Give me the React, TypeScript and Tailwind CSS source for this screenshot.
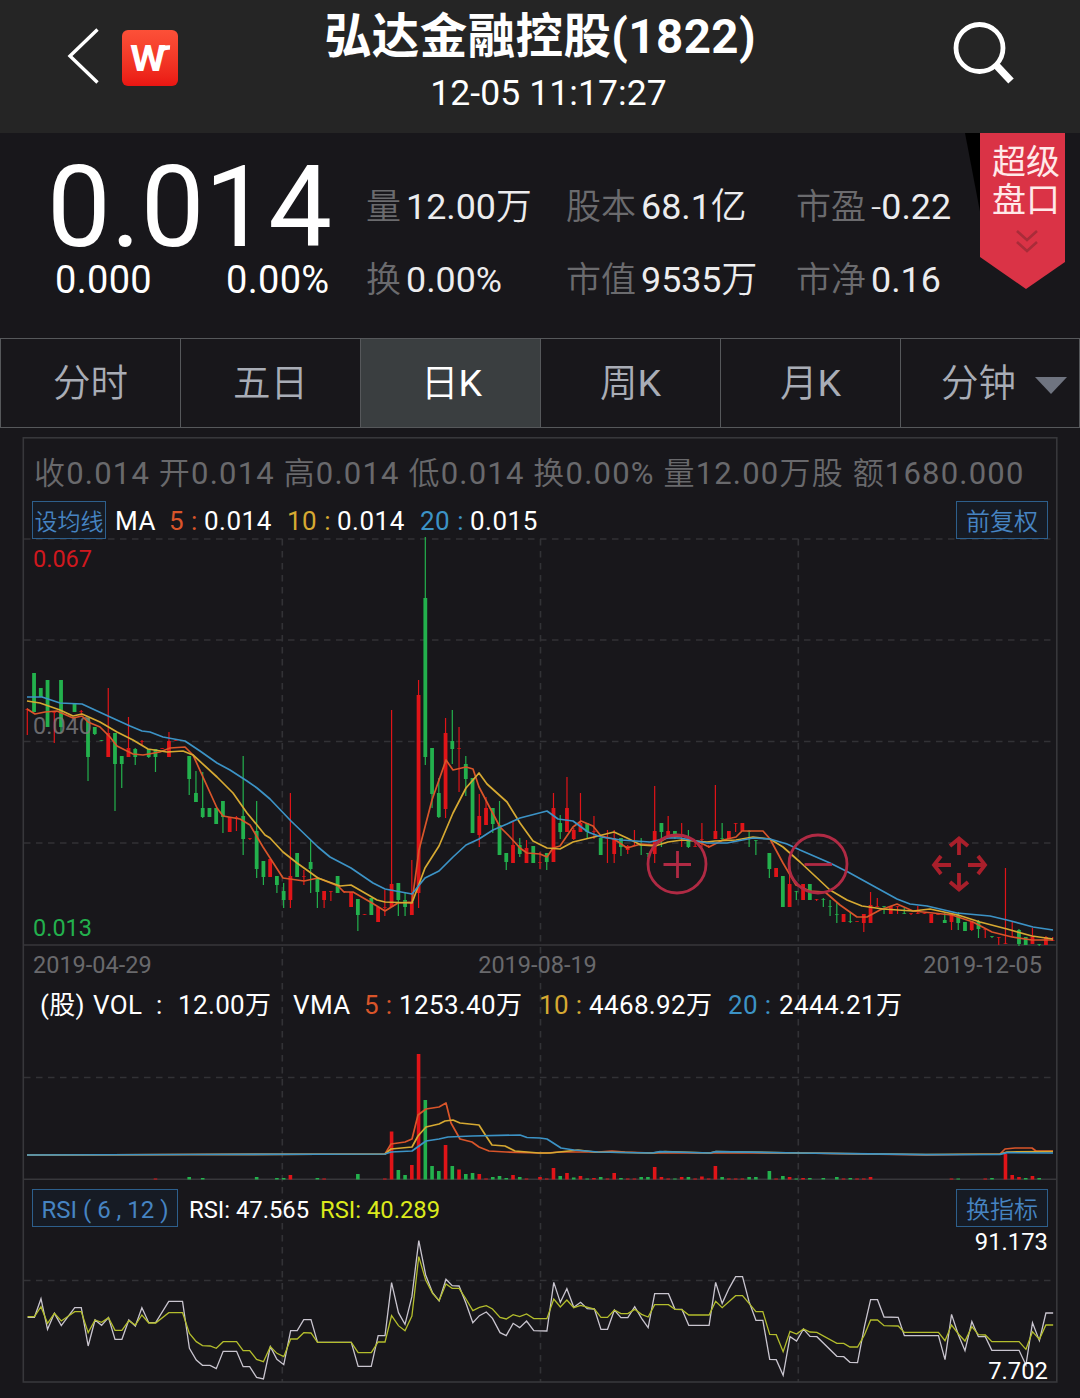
const STEP = 6.746
const FIRST_X = 27.3

const xAt = (i: number) => FIRST_X + i * STEP

// one entry per trading day: index, direction, high, body top, body bottom, low
type Candle = [number, 'r' | 'g', number, number, number, number]

const candles: Candle[] = [
  [0, 'r', 708, 709, 710, 735],
  [1, 'g', 673, 673, 712, 712],
  [2, 'g', 688, 688, 697, 697],
  [3, 'g', 680, 680, 727, 727],
  [4, 'r', 712, 712, 713, 743],
  [5, 'g', 680, 680, 727, 733],
  [7, 'g', 704, 704, 712, 712],
  [8, 'r', 710, 711, 712, 714],
  [9, 'g', 718, 718, 757, 781],
  [10, 'g', 727, 727, 734, 735],
  [11, 'g', 740, 740, 741, 741],
  [12, 'r', 688, 733, 757, 757],
  [13, 'g', 733, 733, 764, 811],
  [14, 'g', 756, 756, 764, 788],
  [15, 'r', 717, 748, 757, 757],
  [16, 'g', 748, 749, 757, 765],
  [17, 'r', 740, 741, 742, 746],
  [18, 'g', 749, 749, 757, 758],
  [19, 'g', 749, 749, 757, 772],
  [20, 'r', 748, 748, 749, 749],
  [21, 'r', 732, 741, 757, 757],
  [22, 'r', 740, 740, 741, 741],
  [24, 'g', 756, 756, 779, 795],
  [25, 'g', 771, 793, 802, 802],
  [26, 'g', 772, 808, 817, 818],
  [27, 'g', 808, 808, 817, 817],
  [28, 'g', 808, 808, 824, 824],
  [29, 'g', 801, 801, 817, 833],
  [30, 'r', 817, 817, 832, 832],
  [31, 'r', 816, 817, 818, 831],
  [32, 'g', 756, 816, 839, 855],
  [33, 'r', 838, 838, 839, 840],
  [34, 'g', 801, 831, 869, 878],
  [35, 'g', 861, 861, 877, 885],
  [36, 'r', 859, 859, 877, 877],
  [37, 'g', 876, 876, 885, 893],
  [38, 'g', 883, 891, 900, 908],
  [39, 'r', 793, 876, 900, 908],
  [40, 'g', 853, 853, 877, 877],
  [41, 'r', 870, 876, 877, 885],
  [42, 'g', 840, 862, 869, 893],
  [43, 'g', 878, 878, 892, 908],
  [44, 'r', 891, 891, 900, 908],
  [45, 'r', 891, 891, 892, 901],
  [46, 'g', 876, 876, 893, 893],
  [47, 'r', 891, 891, 892, 893],
  [48, 'r', 892, 892, 907, 907],
  [49, 'g', 899, 899, 915, 931],
  [50, 'r', 914, 914, 915, 915],
  [51, 'g', 898, 898, 915, 915],
  [52, 'r', 907, 907, 922, 922],
  [53, 'r', 890, 907, 908, 916],
  [54, 'r', 710, 884, 907, 907],
  [55, 'g', 883, 883, 900, 916],
  [56, 'g', 892, 900, 907, 916],
  [57, 'r', 860, 902, 915, 915],
  [58, 'r', 680, 695, 893, 908],
  [59, 'g', 537, 598, 757, 765],
  [60, 'g', 748, 748, 794, 808],
  [61, 'g', 778, 793, 817, 818],
  [62, 'r', 718, 733, 809, 818],
  [63, 'g', 710, 741, 749, 764],
  [64, 'r', 727, 748, 749, 792],
  [65, 'g', 756, 764, 779, 796],
  [66, 'g', 778, 778, 833, 833],
  [67, 'r', 794, 816, 835, 847],
  [68, 'r', 797, 808, 825, 825],
  [69, 'g', 808, 808, 824, 833],
  [70, 'g', 801, 825, 855, 855],
  [71, 'g', 853, 853, 862, 870],
  [72, 'r', 822, 845, 863, 863],
  [73, 'g', 838, 845, 854, 857],
  [74, 'r', 840, 848, 863, 863],
  [75, 'g', 846, 846, 863, 863],
  [76, 'r', 852, 862, 863, 869],
  [77, 'g', 853, 853, 862, 870],
  [78, 'r', 793, 808, 862, 862],
  [79, 'g', 815, 823, 832, 839],
  [80, 'r', 777, 808, 832, 832],
  [81, 'r', 828, 830, 839, 840],
  [82, 'r', 793, 823, 832, 832],
  [83, 'g', 823, 823, 832, 839],
  [84, 'r', 816, 831, 832, 839],
  [85, 'g', 838, 838, 855, 855],
  [86, 'r', 830, 838, 839, 863],
  [87, 'r', 830, 838, 854, 863],
  [88, 'g', 838, 838, 847, 856],
  [89, 'r', 845, 846, 850, 854],
  [90, 'r', 830, 845, 846, 846],
  [91, 'g', 838, 845, 846, 855],
  [92, 'g', 853, 853, 854, 857],
  [93, 'r', 786, 831, 854, 863],
  [94, 'g', 823, 823, 832, 847],
  [95, 'r', 816, 831, 838, 838],
  [96, 'g', 831, 831, 835, 839],
  [97, 'r', 823, 840, 841, 847],
  [98, 'g', 830, 840, 847, 848],
  [99, 'r', 840, 846, 847, 847],
  [100, 'r', 823, 839, 840, 847],
  [101, 'r', 845, 846, 847, 848],
  [102, 'r', 785, 831, 839, 839],
  [103, 'g', 823, 838, 839, 840],
  [104, 'r', 831, 831, 839, 839],
  [105, 'r', 823, 823, 824, 832],
  [106, 'r', 823, 823, 831, 831],
  [107, 'g', 830, 831, 832, 847],
  [108, 'g', 840, 840, 841, 855],
  [110, 'g', 853, 853, 869, 878],
  [111, 'r', 868, 868, 877, 877],
  [112, 'g', 876, 876, 907, 907],
  [113, 'r', 862, 884, 907, 907],
  [114, 'g', 891, 891, 892, 900],
  [115, 'r', 884, 884, 900, 900],
  [116, 'g', 884, 884, 900, 900],
  [117, 'r', 899, 899, 900, 901],
  [118, 'g', 898, 899, 900, 907],
  [119, 'g', 900, 906, 907, 916],
  [120, 'g', 902, 914, 915, 923],
  [121, 'r', 914, 914, 922, 922],
  [122, 'g', 912, 921, 922, 923],
  [123, 'r', 921, 921, 922, 922],
  [124, 'r', 914, 914, 923, 932],
  [125, 'r', 892, 905, 923, 923],
  [126, 'r', 898, 906, 907, 907],
  [127, 'g', 906, 906, 907, 914],
  [128, 'r', 906, 906, 914, 914],
  [129, 'r', 906, 906, 907, 914],
  [130, 'g', 908, 913, 914, 914],
  [131, 'r', 913, 913, 914, 915],
  [132, 'r', 906, 913, 914, 914],
  [133, 'r', 913, 913, 914, 914],
  [134, 'r', 914, 914, 923, 923],
  [135, 'r', 914, 914, 915, 915],
  [136, 'g', 913, 920, 923, 923],
  [137, 'r', 914, 914, 922, 930],
  [138, 'g', 912, 915, 923, 930],
  [139, 'g', 922, 922, 931, 931],
  [140, 'r', 922, 922, 930, 931],
  [141, 'g', 920, 922, 929, 938],
  [142, 'r', 928, 929, 930, 938],
  [143, 'g', 936, 936, 937, 938],
  [144, 'r', 937, 937, 938, 945],
  [145, 'r', 868, 943, 944, 944],
  [146, 'r', 922, 936, 937, 937],
  [147, 'g', 929, 930, 944, 946],
  [148, 'g', 937, 937, 945, 945],
  [149, 'r', 928, 937, 944, 944],
  [150, 'g', 944, 944, 945, 946],
  [151, 'r', 936, 937, 945, 945],
  [152, 'r', 937, 940, 941, 941],
]

const volumes: [number, 'r' | 'g', number][] = [
  [19, 'r', 1], [24, 'g', 2.5], [26, 'g', 1.5], [34, 'g', 2.5], [37, 'g', 1.5], [38, 'g', 1.5],
  [39, 'r', 4.5], [43, 'g', 1.5], [44, 'r', 1], [49, 'g', 5.5], [53, 'r', 1], [54, 'r', 48],
  [55, 'g', 9.5], [56, 'g', 4.5], [57, 'r', 14.5], [58, 'r', 125.5], [59, 'g', 79.5], [60, 'g', 13.5],
  [61, 'g', 8.5], [62, 'r', 34.5], [63, 'g', 13.5], [64, 'r', 10], [65, 'g', 5.5], [66, 'g', 6.5],
  [67, 'r', 5.5], [68, 'r', 1], [69, 'g', 2.5], [70, 'g', 3.5], [71, 'g', 1.5], [72, 'r', 4.5],
  [73, 'g', 2.5], [74, 'r', 1], [76, 'r', 2.5], [77, 'r', 1], [78, 'r', 11.5], [79, 'g', 3.5],
  [80, 'r', 6.5], [81, 'g', 2], [82, 'r', 3.5], [83, 'g', 1], [84, 'r', 1.5], [85, 'g', 2.5],
  [86, 'r', 1], [87, 'r', 6.5], [88, 'g', 1.5], [89, 'r', 1], [90, 'r', 1], [91, 'g', 2.5],
  [92, 'g', 2.5], [93, 'r', 12.5], [94, 'r', 2.5], [95, 'r', 1], [96, 'g', 1], [97, 'r', 2.5],
  [98, 'g', 2.5], [99, 'r', 1], [100, 'r', 3], [101, 'r', 1], [102, 'r', 13.5], [103, 'g', 2.5],
  [104, 'r', 1], [105, 'r', 1], [106, 'r', 1], [107, 'g', 2.5], [108, 'g', 2.5], [110, 'g', 8.5],
  [111, 'r', 1], [112, 'g', 3.5], [113, 'r', 2.5], [114, 'g', 1], [115, 'r', 1.5], [116, 'g', 1.5],
  [118, 'g', 1.5], [120, 'g', 2.5], [121, 'r', 1], [122, 'g', 1.5], [123, 'r', 1], [124, 'r', 1],
  [125, 'r', 2.5], [137, 'r', 1], [138, 'g', 1], [142, 'r', 1], [143, 'g', 1.5], [145, 'r', 25.5],
  [146, 'r', 4.5], [147, 'r', 2.5], [148, 'g', 1.5], [149, 'r', 3.5], [150, 'g', 1.5],
]

const MA5 =
  '27,709 35,714 45,712 57,711 73,718 82,716 88,722 100,727 110,737 117,746 133,754 143,755 160,752 170,748 185,747 193,755 217,808 223,816 240,819 250,825 263,847 283,878 304,881 318,878 338,886 344,892 353,892 372,903 385,911 398,903 412,902 419,850 432,800 446,760 453,770 466,767 473,769 479,787 490,808 500,827 510,837 520,848 527,853 540,854 547,857 553,848 560,846 573,827 581,821 593,826 601,836 614,839 627,848 641,844 655,845 668,837 683,836 703,844 709,847 723,840 736,837 742,831 763,831 770,839 783,863 796,885 810,891 825,892 840,905 857,917 867,917 880,910 897,904 913,911 933,913 952,915 973,922 992,932 1012,937 1032,940 1053,940'
const MA10 =
  '27,701 40,703 60,710 73,716 82,714 100,722 117,732 133,740 148,749 167,752 183,751 193,755 217,777 233,793 247,813 257,825 265,835 270,838 283,852 297,863 318,878 340,886 351,885 377,900 385,902 412,903 425,868 439,846 453,813 466,788 479,773 487,784 507,802 520,823 533,841 547,848 560,849 573,842 594,837 614,832 627,838 641,845 655,846 668,842 682,840 707,842 715,841 736,840 753,837 770,839 783,847 800,862 830,890 847,900 862,906 883,909 913,911 930,909 958,915 980,922 1007,929 1032,936 1053,939'
const MA20 =
  '27,697 42,697 60,703 82,704 108,716 130,726 142,731 150,732 163,737 185,741 200,751 217,763 230,770 247,781 257,788 270,799 291,821 318,847 330,857 351,868 373,883 385,889 412,894 425,878 439,871 453,857 466,845 479,839 493,830 507,824 520,818 547,811 558,819 573,821 588,832 601,837 621,840 650,842 668,838 680,838 707,843 727,843 753,838 770,839 787,844 800,850 830,863 848,872 877,888 897,899 910,904 927,906 957,913 990,916 1007,920 1033,927 1053,930'

const VMA5 =
  '27,1155 190,1154.5 385,1154 391,1144 405,1142 412,1139 418,1115 426,1109 439,1107 446,1103 451,1123 460,1139 472,1142 479,1147 489,1151 506,1152 539,1153 547,1153 560,1152 598,1152 612,1151 625,1152 652,1153 798,1153 926,1155 1000,1154 1005,1149 1015,1148 1032,1148 1036,1151 1053,1151'
const VMA10 =
  '27,1155 190,1154.5 385,1154 391,1149 412,1147 418,1136 426,1127 439,1124 445,1121 453,1120 460,1123 479,1125 486,1136 492,1145 505,1146 515,1151 539,1153 550,1153 578,1150 595,1152 652,1153 665,1151.5 710,1153 716,1151.5 798,1153 926,1154.5 1000,1154 1007,1152 1053,1151.5'
const VMA20 =
  '27,1155 190,1154.5 385,1154 391,1152 412,1151 426,1141 439,1139 448,1137 472,1136 520,1135 527,1137.5 540,1138 547,1139 561,1148 574,1150 598,1152 652,1153 660,1151.7 710,1153 716,1151.7 798,1153 850,1153.7 926,1154.7 1000,1154.3 1007,1152.7 1053,1153'

const RSI6 =
  '80,412 100,412 119,356 138,448 158,400 178,437 217,383 236,383 256,498 276,420 295,436 315,413 334,478 354,478 374,420 393,438 412,383 432,428 452,428 490,364 530,364 550,505 570,540 588,556 610,556 628,566 648,514 687,514 706,560 725,560 745,592 765,597 785,500 804,538 824,554 844,452 863,452 882,419 903,419 922,487 1020,487 1040,559 1078,559 1098,467 1118,467 1137,308 1157,398 1176,433 1196,350 1216,182 1236,285 1256,338 1275,363 1295,298 1313,317 1333,318 1353,370 1373,428 1392,407 1412,396 1430,415 1452,458 1470,467 1490,430 1509,443 1529,423 1550,452 1588,453 1608,307 1627,367 1646,326 1666,382 1686,367 1705,386 1726,387 1745,448 1764,448 1784,390 1803,413 1823,413 1843,380 1863,415 1882,443 1901,341 1941,341 1960,388 1980,388 2000,436 2059,436 2078,307 2097,370 2117,325 2136,290 2156,290 2175,365 2195,421 2215,421 2235,538 2254,539 2274,586 2294,470 2313,483 2333,447 2352,469 2372,470 2430,529 2450,530 2468,547 2490,548 2510,440 2528,359 2548,359 2567,411 2608,412 2626,467 2725,467 2744,539 2763,403 2783,465 2802,512 2822,425 2841,470 2861,470 2880,511 2959,511 2979,555 2998,428 3018,482 3037,399 3058,399'
const RSI12 =
  '80,410 100,410 119,380 138,430 158,400 178,423 217,395 236,395 256,458 276,420 295,427 315,413 334,451 354,451 374,422 393,435 412,405 432,429 452,429 490,398 530,398 550,460 570,485 588,497 610,498 628,505 648,485 687,485 706,512 725,512 745,538 765,545 785,500 804,520 824,530 844,477 863,477 882,458 903,459 922,487 1020,487 1040,518 1078,518 1098,486 1118,486 1137,407 1157,437 1176,452 1196,408 1216,230 1236,300 1256,340 1275,362 1295,312 1313,325 1333,325 1353,357 1373,392 1392,382 1412,377 1430,387 1452,412 1470,417 1490,404 1509,410 1529,402 1550,416 1588,416 1608,357 1627,381 1646,360 1666,383 1686,376 1726,387 1745,412 1764,412 1784,390 1803,401 1823,401 1843,388 1863,403 1882,411 1901,374 1941,374 1960,388 1980,389 2000,405 2059,405 2078,364 2097,383 2136,347 2156,347 2175,370 2195,395 2215,395 2235,463 2254,464 2274,515 2294,454 2313,462 2333,447 2352,456 2372,457 2430,490 2450,490 2468,501 2490,501 2510,465 2528,420 2548,420 2567,437 2608,438 2626,457 2725,457 2744,482 2763,435 2783,462 2802,483 2822,440 2841,464 2861,465 2880,485 2959,485 2979,508 2998,455 3018,478 3037,435 3058,435'

const COLORS = { r: '#e01418', g: '#23b14d' }
const ORANGE = '#d9552a'
const YELLOW = '#d6a932'
const BLUE = '#3c93c6'

const tabs = ['分时', '五日', '日K', '周K', '月K']

// Chinese runs are set a little lighter than the latin letters and digits
function Mixed({ children }: { children: string }) {
  return (
    <span className="whitespace-pre">
      {children.split(/([0-9A-Za-z.%]+)/).map((part, i) => (
        <span key={i} className={i % 2 ? 'font-normal' : 'font-[350]'}>
          {part}
        </span>
      ))}
    </span>
  )
}

function Header() {
  return (
    <header className="flex h-[133px] bg-[#252525]">
      <div className="flex w-[250px] pl-[66px] pt-[26px]">
        <svg width="34" height="60" viewBox="0 0 34 60" fill="none" stroke="#fff" strokeWidth="3.4">
          <path d="M31.5 3.5 4 30 31.5 56.5" />
        </svg>
        <div className="ml-[22px] mt-1 flex size-14 items-center justify-center rounded-md bg-linear-to-b from-[#fc5038] to-[#ea1512]">
          <svg width="56" height="56" viewBox="0 0 56 56">
            <text x="8" y="41" fill="#fff" fontSize="36" fontWeight="700" fontFamily="Roboto" textLength="36" lengthAdjust="spacingAndGlyphs">
              W
            </text>
            <path d="M39.500 21q1-4 8.500-3.500" fill="none" stroke="#fff" strokeWidth="4.5" />
          </svg>
        </div>
      </div>
      <div className="flex w-[580px] flex-col items-center pt-[9px] text-white">
        <h1 className="whitespace-nowrap text-[47.5px] font-bold leading-[56px] tracking-[0.400px]">弘达金融控股(1822)</h1>
        <div className="mt-[7px] pl-[17px] text-[35.5px] leading-[42px] tracking-[0.100px]">12-05 11:17:27</div>
      </div>
      <svg className="ml-[120px] mt-[20px]" width="68" height="68" viewBox="950 20 68 68" fill="none" stroke="#fff">
        <circle cx="979.5" cy="48" r="23.5" strokeWidth="4.8" />
        <path d="m996 65 15 16" strokeWidth="7.5" />
      </svg>
    </header>
  )
}

function Stat({ label, value }: { label: string; value: string }) {
  return (
    <div className="flex h-[73px] items-baseline whitespace-nowrap leading-[73px]">
      <span className="text-[35px] font-[350] text-[#6b6b6e]">{label}</span>
      <span className="ml-[5px] text-[35.800px] text-[#ececee]">
        <Mixed>{value}</Mixed>
      </span>
    </div>
  )
}

function Quote() {
  return (
    <section className="flex h-[205px]">
      <div className="w-[366px] pl-[47px] pt-[19px] text-white">
        <div className="text-[113.500px] leading-[111px]">0.014</div>
        <div className="flex pl-[8px] text-[38px] leading-[34px] tracking-[0.300px]">
          <span className="w-[171px]">0.000</span>
          <span>0.00%</span>
        </div>
      </div>
      <div className="w-[200px] pt-[38px]">
        <Stat label="量" value="12.00万" />
        <Stat label="换" value="0.00%" />
      </div>
      <div className="w-[230px] pt-[38px]">
        <Stat label="股本" value="68.1亿" />
        <Stat label="市值" value="9535万" />
      </div>
      <div className="w-[169px] pt-[38px]">
        <Stat label="市盈" value="-0.22" />
        <Stat label="市净" value="0.16" />
      </div>
      <div className="grid h-[158px] w-[102px]">
        <svg className="[grid-area:1/1]" width="102" height="158" viewBox="965 133 102 158">
          <path d="M965 133h16v84z" fill="#000" />
          <path d="M980 133h85v129l-39 27-46-32z" fill="#da3346" />
          <path d="m1017 231 10 9 10-9M1017 242l10 9 10-9" fill="none" stroke="#a92c39" strokeWidth="2.6" />
        </svg>
        <div className="pl-[27px] pt-[10px] text-[34px] leading-[38px] text-[#ffe9e9] [grid-area:1/1]">
          超级
          <br />
          盘口
        </div>
      </div>
    </section>
  )
}

function Tabs() {
  return (
    <nav className="flex h-[90px] border border-[#56585b] text-[37.5px] text-[#a9adb6]">
      {tabs.map((t) => (
        <div
          key={t}
          className={
            t === '日K'
              ? 'flex w-[180px] items-center justify-center border-r border-[#56585b] bg-[#3a3e40] pl-[2px] text-white'
              : 'flex w-[180px] items-center justify-center border-r border-[#56585b]'
          }
        >
          <Mixed>{t}</Mixed>
        </div>
      ))}
      <div className="flex flex-1 items-center pl-[40px]">
        <Mixed>分钟</Mixed>
        <svg className="ml-[19px] mt-1" width="32" height="17" viewBox="0 0 32 17">
          <path d="M0 0h32L16 17z" fill="#6f7480" />
        </svg>
      </div>
    </nav>
  )
}

function Plot() {
  return (
    <svg className="[grid-area:1/1]" width="1036" height="946" viewBox="22 437 1036 946" fill="none">
      <g stroke="#323236" strokeWidth="1.6" strokeDasharray="6.5 5.5">
        {[539, 640, 741.5, 843, 1077.5, 1280.5].map((y) => (
          <path key={y} d={`M24 ${y}H1057`} />
        ))}
        {[282.3, 540.5, 798.3].map((x) => (
          <path key={x} d={`M${x} 539V1382`} />
        ))}
      </g>
      <g stroke="#37373b" strokeWidth="1.6">
        <path d="M24 945H1057M24 1179.3H1057" />
        <rect x="23.3" y="437.8" width="1033.5" height="944.2" />
      </g>

      {candles.map(([i, c, high, top, bottom, low]) => {
        const x = xAt(i)
        const thin = bottom - top <= 1
        return (
          <g key={i} fill={COLORS[c]}>
            <rect x={x - 0.6} y={high} width="1.2" height={low - high} />
            <rect x={x - 1.9} y={top} width="3.8" height={bottom - top} opacity={thin ? 0.7 : 1} />
          </g>
        )
      })}
      <text x="33" y="734" fill="#7a7a7d" fillOpacity=".85" fontSize="23.5">
        0.040
      </text>
      <g strokeWidth="1.7" strokeLinejoin="round">
        <polyline points={MA5} stroke={ORANGE} />
        <polyline points={MA10} stroke={YELLOW} />
        <polyline points={MA20} stroke={BLUE} />
      </g>

      {volumes.map(([i, c, h]) => (
        <rect key={i} x={xAt(i) - 1.8} y={1179.5 - h} width="3.6" height={h} fill={COLORS[c]} />
      ))}
      <g strokeWidth="1.7" strokeLinejoin="round">
        <polyline points={VMA5} stroke={ORANGE} />
        <polyline points={VMA10} stroke={YELLOW} />
        <polyline points={VMA20} stroke={BLUE} />
      </g>

      <g transform="translate(0 1180) scale(.34439 .33333)" strokeWidth="1.3">
        <polyline points={RSI6} stroke="#c9c5cf" vectorEffect="non-scaling-stroke" />
        <polyline points={RSI12} stroke="#b3bd2c" vectorEffect="non-scaling-stroke" />
      </g>

      {/* zoom and pan controls */}
      <g stroke="#b02a44" strokeWidth="2.8">
        <circle cx="677" cy="864" r="29" />
        <path d="M663.5 864.5h27.5M677.5 851v27" />
        <circle cx="818" cy="864" r="29" />
        <path d="M804.5 864.5h27.5" />
      </g>
      <g stroke="#a91f2b" strokeWidth="3.8">
        <path d="M959 855V839M950 846l9-7.500 9 7.500" />
        <path d="M959 873v16M950 882l9 7.500 9-7.500" />
        <path d="M951 865h-16M941 856l-7 9 7 9" />
        <path d="M968 865h16M978 856l7 9-7 9" />
      </g>
    </svg>
  )
}

function BoxButton({ children }: { children: string }) {
  return (
    <div className="flex h-[38px] w-[92px] items-center justify-center whitespace-nowrap border-[1.500px] border-[#2d5f8c] bg-[#161b24] pt-[4px] text-[24px] font-[350] text-[#4684c2]">
      {children}
    </div>
  )
}

function ChartFrame() {
  return (
    <section className="ml-[22px] mt-[9px] grid h-[946px] w-[1036px]">
      <Plot />
      <div className="flex flex-col whitespace-nowrap text-white [grid-area:1/1]">
        <div className="flex h-[64px] items-center pl-[12px] pt-[11px] text-[31px] tracking-[1.200px] text-[#69696c]">
          <Mixed>收0.014 开0.014 高0.014 低0.014 换0.00% 量12.00万股 额1680.000</Mixed>
        </div>
        <div className="flex h-[38px] items-center justify-between pl-[10px] pr-[10px]">
          <div className="flex items-center text-[26px] leading-[38px] tracking-[0.500px]">
            <div className="flex h-[38px] w-[74px] items-center justify-center border-[1.500px] border-[#2d5f8c] bg-[#161b24] pt-[5px] text-[23px] font-[350] tracking-normal text-[#4684c2]">
              设均线
            </div>
            <span className="ml-[9px] w-[54px] pt-[2px]">MA</span>
            <span className="w-[35px] pt-[2px] text-[#d9552a]">5 :</span>
            <span className="w-[83px] pt-[2px]">0.014</span>
            <span className="w-[50px] pt-[2px] text-[#d6a932]">10 :</span>
            <span className="w-[83px] pt-[2px]">0.014</span>
            <span className="w-[50px] pt-[2px] text-[#3c93c6]">20 :</span>
            <span className="pt-[2px]">0.015</span>
          </div>
          <BoxButton>前复权</BoxButton>
        </div>
        <div className="flex h-[406px] flex-col justify-between pb-[2px] pl-[11px] pt-[5px] text-[23.500px] leading-[30px]">
          <span className="text-[#d0181e]">0.067</span>
          <span className="text-[#23b14d]">0.013</span>
        </div>
        <div className="flex h-[40px] items-center justify-between pl-[11px] pr-[16px] pt-[2px] text-[23.500px] text-[#69696c]">
          <span>2019-04-29</span>
          <span>2019-08-19</span>
          <span>2019-12-05</span>
        </div>
        <div className="flex h-[40px] items-center pl-[18px] text-[26px] tracking-[0.350px]">
          <span className="w-[53px]">(股)</span>
          <span className="w-[63px]">VOL</span>
          <span className="w-[22px]">:</span>
          <span className="w-[115px]">12.00万</span>
          <span className="w-[71px]">VMA</span>
          <span className="w-[35px] text-[#d9552a]">5 :</span>
          <span className="w-[140px]">1253.40万</span>
          <span className="w-[50px] text-[#d6a932]">10 :</span>
          <span className="w-[139px]">4468.92万</span>
          <span className="w-[51px] text-[#3c93c6]">20 :</span>
          <span>2444.21万</span>
        </div>
        <div className="mt-[164px] flex h-[38px] items-center justify-between pl-[10px] pr-[10px]">
          <div className="flex items-center text-[23.800px] leading-[30px]">
            <div className="flex h-[38px] w-[146px] items-center justify-center border-[1.500px] border-[#2d5f8c] bg-[#161b24] pt-[4px] text-[24px] text-[#4684c2]">
              RSI ( 6 , 12 )
            </div>
            <span className="ml-[11px] w-[131px] pt-[3px]">RSI: 47.565</span>
            <span className="pt-[3px] text-[#dcea1c]">RSI: 40.289</span>
          </div>
          <BoxButton>换指标</BoxButton>
        </div>
        <div className="flex h-[159px] flex-col items-end justify-between pr-[10px] text-[23.800px] leading-[30px]">
          <span>91.173</span>
          <span>7.702</span>
        </div>
      </div>
    </section>
  )
}

export default function App() {
  return (
    <main className="h-[1398px] w-[1080px] overflow-hidden bg-[#18171b] font-[Roboto,'Noto_Sans_CJK_SC',sans-serif]">
      <Header />
      <Quote />
      <Tabs />
      <ChartFrame />
    </main>
  )
}
